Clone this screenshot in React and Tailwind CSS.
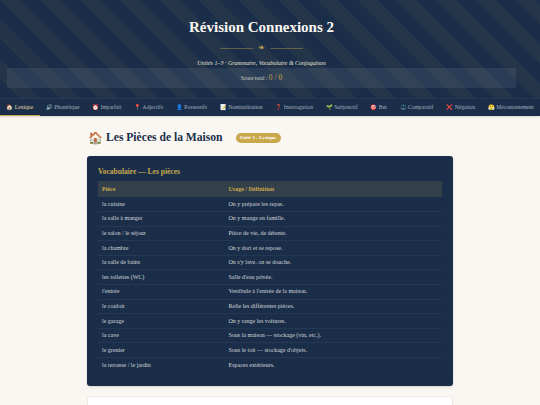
const tabs = [
  ["🏠", "Lexique"],
  ["🔊", "Phonétique"],
  ["⏰", "Imparfait"],
  ["📍", "Adjectifs"],
  ["👤", "Possessifs"],
  ["📝", "Nominalisation"],
  ["❓", "Interrogation"],
  ["🌱", "Subjonctif"],
  ["🎯", "But"],
  ["⚖️", "Comparatif"],
  ["❌", "Négation"],
  ["😤", "Mécontentement"],
];

const rows = [
  ["la cuisine", "On y prépare les repas."],
  ["la salle à manger", "On y mange en famille."],
  ["le salon / le séjour", "Pièce de vie, de détente."],
  ["la chambre", "On y dort et se repose."],
  ["la salle de bains", "On s'y lave, on se douche."],
  ["les toilettes (WC)", "Salle d'eau privée."],
  ["l'entrée", "Vestibule à l'entrée de la maison."],
  ["le couloir", "Relie les différentes pièces."],
  ["le garage", "On y range les voitures."],
  ["la cave", "Sous la maison — stockage (vin, etc.)."],
  ["le grenier", "Sous le toit — stockage d'objets."],
  ["la terrasse / le jardin", "Espaces extérieurs."],
];

export default function App() {
  return (
    <div className="h-[405px] overflow-hidden bg-[#faf7f2] font-['Liberation_Serif',serif]">
      {/* Header */}
      <header className="h-[98px] pl-[7px] pr-[24px] pt-[16px] text-center bg-[#1a2e4a] bg-[repeating-linear-gradient(45deg,transparent_0px,transparent_14px,rgba(201,168,76,0.06)_14px,rgba(201,168,76,0.06)_28px)]">
        <h1 className="text-[15px] leading-[22px] font-bold text-[#faf7f2]">
          Révision Connexions 2
        </h1>
        <div className="mt-[8px] flex items-center justify-center gap-[5px]">
          <span className="w-[33px] h-px bg-[#c9a84c]/40"></span>
          <span className="text-[8px] leading-[4px] text-[#c9a84c]">❧</span>
          <span className="w-[33px] h-px bg-[#c9a84c]/40"></span>
        </div>
        <p className="mt-[9px] text-[6px] leading-[9px] italic text-[#e8e2d6]">
          Unités 1–3 · Grammaire, Vocabulaire &amp; Conjugaison
        </p>
        <div className="h-[20px] flex items-center justify-center bg-white/[0.07] text-[5.5px] text-[#d8d6d0]">
          <span>
            Score total : <span className="text-[7.5px] text-[#c9a84c]">0 / 0</span>
          </span>
        </div>
      </header>

      {/* Tabs */}
      <nav className="h-[18px] flex overflow-hidden bg-[#1a2e4a] border-t border-white/5 shadow-sm">
        {tabs.map(([icon, label], i) => (
          <div
            key={label}
            className={
              i === 0
                ? "shrink-0 flex items-center gap-[1.4px] px-[6.4px] border-b border-[#c9a84c] text-[#e8d9a8] text-[5.6px]"
                : "shrink-0 flex items-center gap-[1.4px] px-[6.4px] text-[#a3aebd] text-[5.6px]"
            }
          >
            <span className="text-[5.5px]">{icon}</span>
            <span>{label}</span>
          </div>
        ))}
      </nav>

      {/* Main */}
      <main className="w-[366px] mx-auto pt-[15px]">
        <div className="flex items-center h-[14px]">
          <span className="text-[12px] leading-none ml-[1px]">🏠</span>
          <h2 className="ml-[3px] text-[11.6px] font-bold text-[#1a2e4a]">
            Les Pièces de la Maison
          </h2>
          <span className="ml-[13px] h-[10px] w-[45px] flex items-center justify-center rounded-full bg-[#c9a84c] text-[5px] font-bold text-white">
            Unité 1 - Lexique
          </span>
        </div>

        <section className="mt-[11px] h-[230px] rounded-[3px] bg-[#1a2e4a] px-[11px] pt-[11px] shadow-sm">
          <h3 className="text-[7.5px] leading-[10px] font-bold text-[#c9a84c]">
            Vocabulaire — Les pièces
          </h3>
          <table className="mt-[4px] w-full table-fixed border-collapse text-[6px] text-[#d5d6d8]">
            <thead>
              <tr className="h-[16px] bg-[#c9a84c]/15 text-left text-[#c9a84c]">
                <th className="w-[126.5px] pl-[4px] font-bold">Pièce</th>
                <th className="pl-[4px] font-bold">Usage / Définition</th>
              </tr>
            </thead>
            <tbody>
              {rows.map(([a, b]) => (
                <tr key={a} className="h-[14.6px] border-b border-white/5 last:border-b-0">
                  <td className="pl-[4px]">{a}</td>
                  <td className="pl-[4px]">{b}</td>
                </tr>
              ))}
            </tbody>
          </table>
        </section>

        <section className="mt-[10px] h-[40px] rounded-[3px] bg-white border border-[#eee9df]"></section>
      </main>
    </div>
  );
}
